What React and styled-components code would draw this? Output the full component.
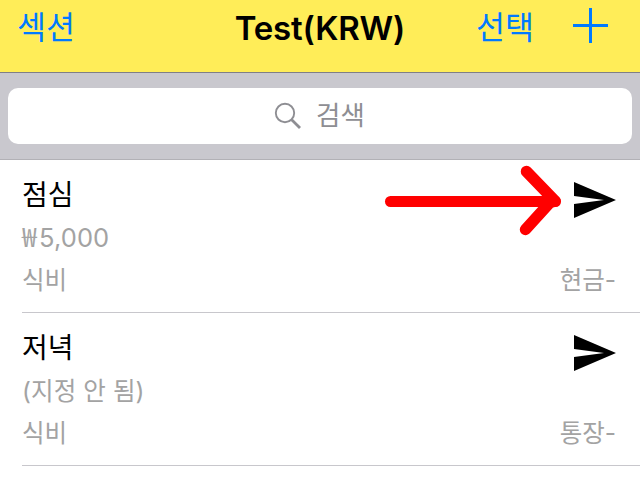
import React from "react";
import styled, { createGlobalStyle } from "styled-components";

const GlobalStyle = createGlobalStyle`
  * { box-sizing: border-box; }
  body {
    margin: 0;
    overflow: hidden;
    background: #fff;
    font-family: Inter, "Noto Sans CJK KR", sans-serif;
  }
`;

const Screen = styled.div`
  position: relative;
  width: 640px;
  height: 478px;
  overflow: hidden;
  background: #fff;
`;

const NavBar = styled.header`
  display: grid;
  grid-template-columns: 1fr auto 1fr;
  height: 73px;
  padding: 0 32px 0 17px;
  background: #ffed58;
  border-bottom: 1px solid #807f86;
`;

const NavTitle = styled.h1`
  margin: 0 0 0 15px;
  font-size: 33px;
  font-weight: 600;
  line-height: 56px;
  letter-spacing: -0.15px;
  color: #000;
`;

const NavButton = styled.button`
  padding: 0;
  border: 0;
  background: none;
  color: #007aff;
  font: 400 31.5px/51px "Noto Sans CJK KR", sans-serif;
  height: 51px;
  text-align: left;
`;

const NavActions = styled.div`
  display: flex;
  justify-content: flex-end;
  gap: 39px;
`;

const PlusIcon = styled.svg`
  width: 35px;
  height: 35px;
  margin-top: 8px;
`;

const SearchBar = styled.div`
  height: 87px;
  padding: 15px 8px;
  background: #c9c8ce;
  border-bottom: 1px solid #b2b1b6;
`;

const SearchField = styled.div`
  display: flex;
  justify-content: center;
  height: 56px;
  padding-right: 1px;
  border-radius: 10px;
  background: #fff;
  color: #8e8e93;
`;

const SearchIcon = styled.svg`
  width: 28px;
  height: 28px;
  margin: 14px 14px 0 0;
`;

const SearchLabel = styled.span`
  font: 400 26.5px/52px "Noto Sans CJK KR", sans-serif;
`;

const List = styled.ul`
  margin: 0;
  padding: 0;
  list-style: none;
`;

const Row = styled.li`
  display: flex;
  justify-content: space-between;
  height: 153px;
  margin-left: 22px;
  padding: 12px 24px 0 0;
  border-bottom: 1px solid #c8c7cc;
`;

const Column = styled.div`
  display: flex;
  flex-direction: column;
  align-items: ${(p) => (p.$end ? "flex-end" : "flex-start")};
`;

const RowTitle = styled.div`
  height: 44px;
  font: 400 28px/42px "Noto Sans CJK KR", sans-serif;
  color: #000;
`;

const RowText = styled.div`
  height: 42px;
  font: 400 24.5px/44px Inter, "Noto Sans CJK KR", sans-serif;
  color: #a3a3a3;
`;

const Amount = styled(RowText)`
  display: flex;
  align-items: baseline;
  letter-spacing: 0.1px;
  font-size: ${(p) => (p.$numeric ? 25.5 : 24.5)}px;
  line-height: ${(p) => (p.$numeric ? 40 : 44)}px;
`;

const Currency = styled.span`
  width: 17px;
  font-family: "Noto Sans CJK KR", sans-serif;
  font-size: 26.5px;
`;

const SendIcon = styled.svg`
  width: 42px;
  height: 36px;
  margin: 10px 0 40px;
`;

const Pointer = styled.svg`
  position: absolute;
  left: 380px;
  top: 160px;
  width: 190px;
  height: 80px;
`;

const entries = [
  { title: "점심", currency: "₩", amount: "5,000", category: "식비", account: "현금-" },
  { title: "저녁", amount: "(지정 안 됨)", category: "식비", account: "통장-" },
];

function Entry({ title, currency, amount, category, account }) {
  return (
    <Row>
      <Column>
        <RowTitle>{title}</RowTitle>
        <Amount $numeric={Boolean(currency)}>
          {currency && <Currency>{currency}</Currency>}
          {amount}
        </Amount>
        <RowText>{category}</RowText>
      </Column>
      <Column $end>
        <SendIcon viewBox="0 0 42 36">
          <path d="M0 0L42 18L0 36V22L30 18L0 14Z" fill="#000" />
        </SendIcon>
        <RowText>{account}</RowText>
      </Column>
    </Row>
  );
}

export default function App() {
  return (
    <>
      <GlobalStyle />
      <Screen>
        <NavBar>
          <NavButton>섹션</NavButton>
          <NavTitle>Test(KRW)</NavTitle>
          <NavActions>
            <NavButton>선택</NavButton>
            <PlusIcon viewBox="0 0 35 35">
              <path d="M0 17.5H35M17.5 0V35" stroke="#007aff" strokeWidth="3" />
            </PlusIcon>
          </NavActions>
        </NavBar>
        <SearchBar>
          <SearchField>
            <SearchIcon viewBox="0 0 28 28" fill="none" stroke="currentColor">
              <circle cx="11" cy="11" r="9.2" strokeWidth="1.9" />
              <path d="M17.7 17.7L26 26" strokeWidth="2.8" />
            </SearchIcon>
            <SearchLabel>검색</SearchLabel>
          </SearchField>
        </SearchBar>
        <List>
          {entries.map((entry) => (
            <Entry key={entry.title} {...entry} />
          ))}
        </List>
        <Pointer viewBox="380 160 190 80" fill="none" stroke="#f00" strokeWidth="11" strokeLinecap="round" strokeLinejoin="round">
          <path d="M390.5 201.5H555.5" />
          <path d="M526.5 171.5L555 201L550 202.5L525.5 229.5" strokeWidth="11.5" />
        </Pointer>
      </Screen>
    </>
  );
}
